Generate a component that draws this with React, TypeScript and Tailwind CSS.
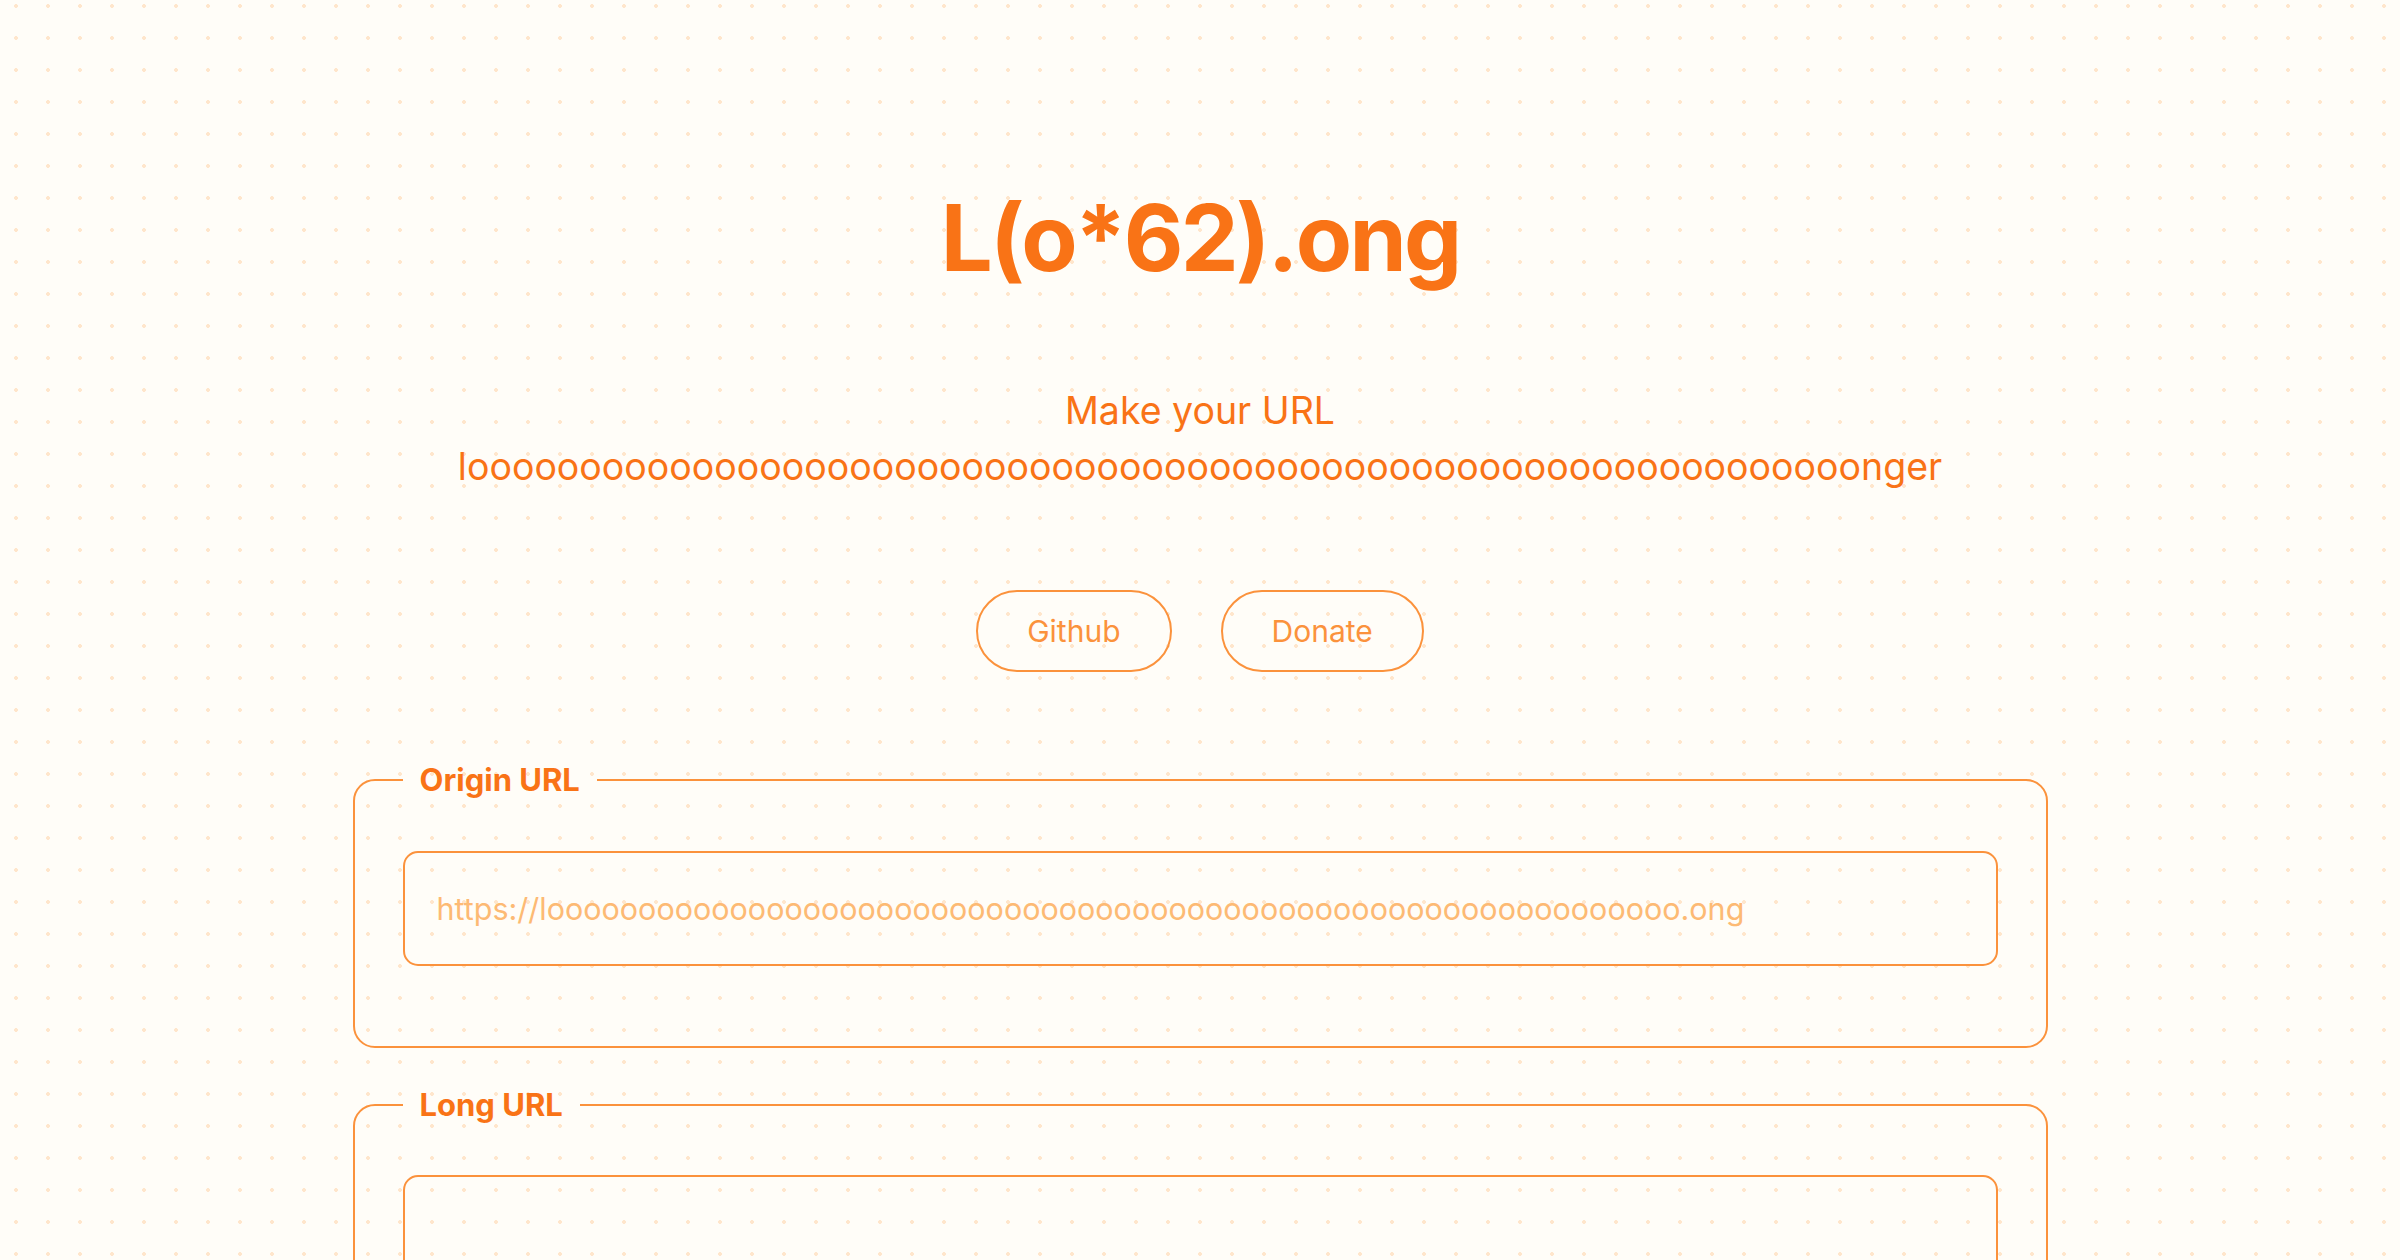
export default function App() {
  const longO = 'o'.repeat(62);
  return (
    <div className="min-h-screen bg-[#fffdf8] bg-[radial-gradient(circle,#ffe6cc_1.6px,transparent_2.2px)] bg-[size:32px_32px] bg-[position:0px_-10px] font-['Inter','Liberation_Sans',sans-serif]">
      <div className="mx-auto w-[1695px] pt-[192px] pb-24">
        {/* Header */}
        <h1 className="text-center text-[92px] leading-none font-bold tracking-[-0.03em] text-[#f97316]">L(o*62).ong</h1>
        <p className="mt-[99px] text-center text-[37.5px] leading-[56px] text-[#f97316]">
          Make your URL
          <br />
          l{longO}nger
        </p>

        <div className="mt-[95px] flex justify-center gap-[49px]">
          <PillButton label="Github" />
          <PillButton label="Donate" />
        </div>

        <div className="mt-[85px] flex flex-col gap-[34px]">
          <UrlField legend="Origin URL" placeholder={`https://l${longO}.ong`} />
          <UrlField legend="Long URL" placeholder="" />
        </div>
      </div>
    </div>
  );
}

function PillButton({ label }: { label: string }) {
  return (
    <button className="h-[82px] rounded-full border-2 border-[#fb923c] px-[49px] text-[30px] text-[#fb923c] flex items-center">
      {label}
    </button>
  );
}

function UrlField({ legend, placeholder }: { legend: string; placeholder: string }) {
  return (
    <fieldset className="rounded-[22px] border-2 border-[#fb923c] px-12 pb-[80px]">
      <legend className="px-[17px] text-[31px] font-bold text-[#f97316]">{legend}</legend>
      <input
        type="text"
        placeholder={placeholder}
        className="mt-[47px] block h-[115px] w-full rounded-[15px] border-2 border-[#fb923c] bg-transparent px-[32px] text-[30.5px] text-[#f97316] placeholder:text-[#fdba74] outline-none"
      />
    </fieldset>
  );
}
